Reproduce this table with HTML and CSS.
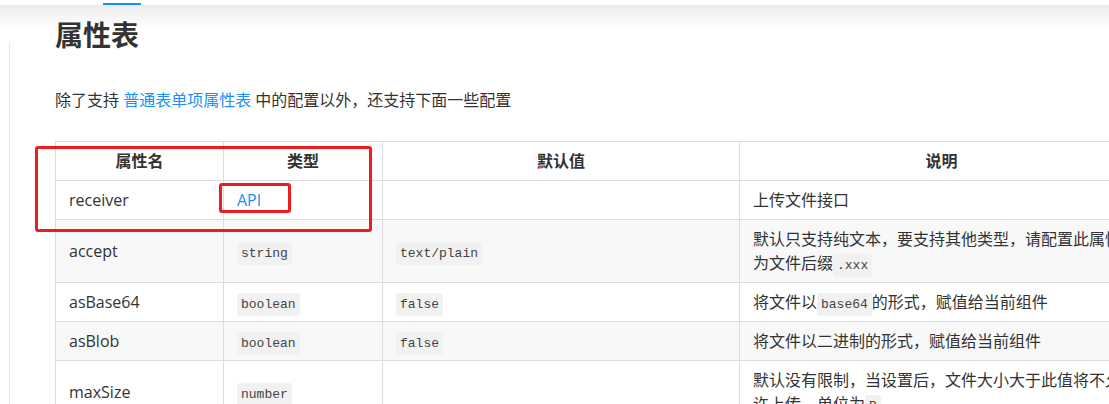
FILE: index.html
```html
<!DOCTYPE html>
<html lang="zh">
<head>
<meta charset="utf-8">
<title>属性表</title>
<link rel="stylesheet" href="styles.css">
</head>
<body>
<header class="topbar"><span class="tab-indicator"></span></header>
<div class="layout">
  <aside class="sidebar"></aside>
  <main class="content">
    <h1 class="title">属性表</h1>
    <p class="intro">除了支持 <a class="link">普通表单项属性表</a> 中的配置以外，还支持下面一些配置</p>
    <div class="table-wrap">
      <table class="props">
        <colgroup>
          <col class="c-name">
          <col class="c-type">
          <col class="c-default">
          <col class="c-desc">
        </colgroup>
        <thead>
          <tr><th>属性名</th><th>类型</th><th>默认值</th><th>说明</th></tr>
        </thead>
        <tbody>
          <tr><td>receiver</td><td><a class="link">API</a></td><td></td><td>上传文件接口</td></tr>
          <tr><td>accept</td><td><code>string</code></td><td><code>text/plain</code></td><td>默认只支持纯文本，要支持其他类型，请配置此属性为文件后缀<code>.xxx</code></td></tr>
          <tr><td>asBase64</td><td><code>boolean</code></td><td><code>false</code></td><td>将文件以<code>base64</code>的形式，赋值给当前组件</td></tr>
          <tr><td>asBlob</td><td><code>boolean</code></td><td><code>false</code></td><td>将文件以二进制的形式，赋值给当前组件</td></tr>
          <tr><td>maxSize</td><td><code>number</code></td><td></td><td>默认没有限制，当设置后，文件大小大于此值将不允许上传，单位为<code>B</code></td></tr>
        </tbody>
      </table>
      <div class="mark mark-big"></div>
      <div class="mark mark-small"></div>
    </div>
  </main>
</div>
</body>
</html>
```

FILE: styles.css
```css
html, body {
  margin: 0;
  padding: 0;
  overflow: hidden;
}

body {
  font-family: "Open Sans", "Noto Sans CJK SC", sans-serif;
  color: #333;
  background: linear-gradient(#ececec, #ffffff) 0 5px / 100% 24px no-repeat, #ffffff;
}

.topbar {
  display: block;
  height: 5px;
}

.tab-indicator {
  display: block;
  width: 38px;
  height: 2px;
  margin: 3px 0 0 103px;
  background: #1890ff;
}

.layout {
  display: flex;
}

.sidebar {
  flex: none;
  width: 9px;
  margin-top: 35px;
  border-right: 1px solid #e4e4e4;
}

.content {
  flex: none;
  padding-left: 45px;
}

.title {
  margin: 7px 0 0;
  font-size: 28px;
  line-height: 40px;
  font-weight: 700;
  color: #333;
}

.intro {
  margin: 33px 0 0;
  font-size: 16px;
  line-height: 24px;
}

.link {
  color: #1890ff;
  text-decoration: none;
}

.table-wrap {
  position: relative;
  margin-top: 29px;
}

.props {
  border-collapse: collapse;
  table-layout: fixed;
  width: 1088px;
}

.c-name { width: 168px; }
.c-type { width: 159px; }
.c-default { width: 357px; }
.c-desc { width: 404px; }

.props th,
.props td {
  border: 1px solid #dddddd;
  padding: 7px 13px;
  font-size: 16px;
  line-height: 24px;
  text-align: left;
  vertical-align: middle;
}

.props th {
  text-align: center;
  font-weight: 700;
  color: #333;
}

.props tbody tr:nth-child(2n) {
  background: #f8f8f8;
}

.props code {
  font-family: "Liberation Mono", "DejaVu Sans Mono", monospace;
  font-size: 13px;
  line-height: 1;
  color: #444;
  background: #f1f1f1;
  padding: 4px 4px;
  border-radius: 3px;
}

.mark {
  position: absolute;
  box-sizing: border-box;
  border: 3px solid #f01c1c;
  border-radius: 3px;
}

.mark-big {
  left: -20px;
  top: 5px;
  width: 337px;
  height: 86px;
}

.mark-small {
  left: 164px;
  top: 42px;
  width: 72px;
  height: 30px;
}
```
